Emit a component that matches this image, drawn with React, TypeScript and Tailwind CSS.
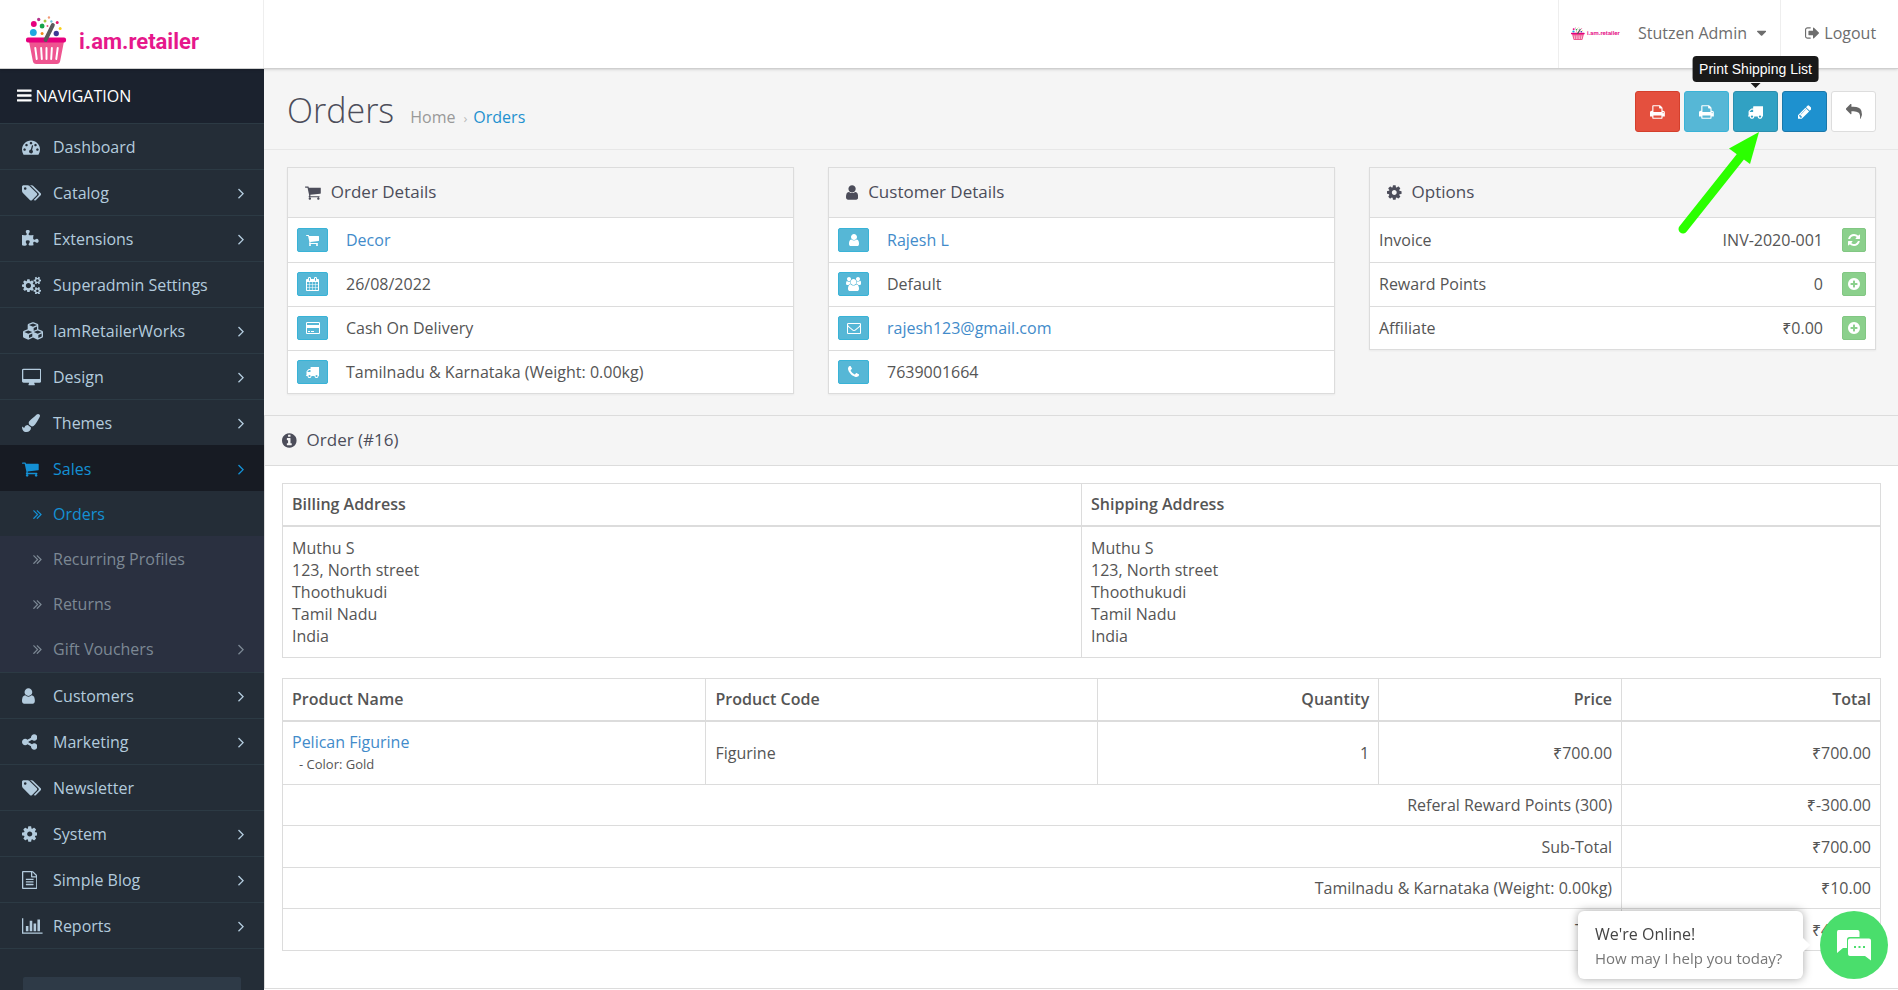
import type { ReactNode } from "react";
import { FaCubes, FaPaintBrush } from "react-icons/fa";

// [left edge, width, path] on a 1792 high grid
const GLYPHS: Record<string, [number, number, string]> = {
  bars: [128, 1536, "M1664 1344v128q0 26-19 45t-45 19h-1408q-26 0-45-19t-19-45v-128q0-26 19-45t45-19h1408q26 0 45 19t19 45zm0-512v128q0 26-19 45t-45 19h-1408q-26 0-45-19t-19-45v-128q0-26 19-45t45-19h1408q26 0 45 19t19 45zm0-512v128q0 26-19 45t-45 19h-1408q-26 0-45-19t-19-45v-128q0-26 19-45t45-19h1408q26 0 45 19t19 45z"],
  dashboard: [0, 1792, "M384 1152q0-53-37.5-90.5t-90.5-37.5-90.5 37.5-37.5 90.5 37.5 90.5 90.5 37.5 90.5-37.5 37.5-90.5zm192-448q0-53-37.5-90.5t-90.5-37.5-90.5 37.5-37.5 90.5 37.5 90.5 90.5 37.5 90.5-37.5 37.5-90.5zm428 481l101-382q6-26-7.5-48.5t-38.5-29.5-48 6.5-30 39.5l-101 382q-60 5-107 43.5t-63 98.5q-20 77 20 146t117 89 146-20 89-117q16-60-6-117t-72-91zm660-33q0-53-37.5-90.5t-90.5-37.5-90.5 37.5-37.5 90.5 37.5 90.5 90.5 37.5 90.5-37.5 37.5-90.5zm-640-640q0-53-37.5-90.5t-90.5-37.5-90.5 37.5-37.5 90.5 37.5 90.5 90.5 37.5 90.5-37.5 37.5-90.5zm448 192q0-53-37.5-90.5t-90.5-37.5-90.5 37.5-37.5 90.5 37.5 90.5 90.5 37.5 90.5-37.5 37.5-90.5zm320 448q0 261-141 483-19 29-54 29h-1402q-35 0-54-29-141-221-141-483 0-182 71-348t191-286 286-191 348-71 348 71 286 191 191 286 71 348z"],
  tags: [128, 1900, "M576 448q0-53-37.5-90.5t-90.5-37.5-90.5 37.5-37.5 90.5 37.5 90.5 90.5 37.5 90.5-37.5 37.5-90.5zm1067 576q0 53-37 90l-491 492q-39 37-91 37-53 0-90-37l-715-716q-38-37-64.5-101t-26.5-117v-416q0-52 38-90t90-38h416q53 0 117 26.5t102 64.5l715 714q37 39 37 91zm384 0q0 53-37 90l-491 492q-39 37-91 37-36 0-59-14t-53-45l470-470q37-37 37-90 0-52-37-91l-715-714q-38-38-102-64.5t-117-26.5h224q53 0 117 26.5t102 64.5l715 714q37 39 37 91z"],
  puzzle: [96, 1664, "M1755 1083q0 81-44.5 135t-123.5 54q-41 0-77.5-17.5t-59-38-56.5-38-71-17.5q-110 0-110 124 0 39 16 115t15 115v5q-22 0-33 1-34 3-97.5 11.5t-115.5 13.5-98 5q-61 0-103-26.5t-42-83.5q0-37 17.5-71t38-56.5 38-59 17.5-77.5q0-79-54-123.5t-135-44.5q-84 0-143 45.5t-59 127.5q0 43 15 83t33.5 64.5 33.5 53 15 50.5q0 45-46 89-37 35-117 35-95 0-245-24-9-2-27.5-4t-27.5-4l-13-2q-1 0-3-1-2 0-2-1v-1024q2 1 17.5 3.5t34 5 21.5 3.5q150 24 245 24 80 0 117-35 46-44 46-89 0-22-15-50.5t-33.5-53-33.5-64.5-15-83q0-82 59-127.5t144-45.5q80 0 134 44.5t54 123.5q0 41-17.5 77.5t-38 59-38 56.5-17.5 71q0 57 42 83.5t103 26.5q64 0 180-15t163-17v2q-1 2-3.5 17.5t-5 34-3.5 21.5q-24 150-24 245 0 80 35 117 44 46 89 46 22 0 50.5-15t53-33.5 64.5-33.5 83-15q82 0 127.5 59t45.5 143z"],
  cogs: [0, 1920, "M896 960q0-106-75-181t-181-75-181 75-75 181 75 181 181 75 181-75 75-181zm768 512q0-52-38-90t-90-38-90 38-38 90q0 53 37.5 90.5t90.5 37.5 90.5-37.5 37.5-90.5zm0-1024q0-52-38-90t-90-38-90 38-38 90q0 53 37.5 90.5t90.5 37.5 90.5-37.5 37.5-90.5zm-384 421v185q0 10-7 19.5t-16 10.5l-155 24q-11 35-32 76 34 48 90 115 7 11 7 20 0 12-7 19-23 30-82.5 89.5t-78.5 59.5q-11 0-21-7l-115-90q-37 19-77 31-11 108-23 155-7 24-30 24h-186q-11 0-20-7.5t-10-17.5l-23-153q-34-10-75-31l-118 89q-7 7-20 7-11 0-21-8-144-133-144-160 0-9 7-19 10-14 41-53t47-61q-23-44-35-82l-152-24q-10-1-17-9.5t-7-19.5v-185q0-10 7-19.5t16-10.5l155-24q11-35 32-76-34-48-90-115-7-11-7-20 0-12 7-20 22-30 82-89t79-59q11 0 21 7l115 90q34-18 77-32 11-108 23-154 7-24 30-24h186q11 0 20 7.5t10 17.5l23 153q34 10 75 31l118-89q8-7 20-7 11 0 21 8 144 133 144 160 0 8-7 19-12 16-42 54t-45 60q23 48 34 82l152 23q10 2 17 10.5t7 19.5zm640 533v140q0 16-149 31-12 27-30 52 51 113 51 138 0 4-4 7-122 71-124 71-8 0-46-47t-52-68q-20 2-30 2t-30-2q-14 21-52 68t-46 47q-2 0-124-71-4-3-4-7 0-25 51-138-18-25-30-52-149-15-149-31v-140q0-16 149-31 13-29 30-52-51-113-51-138 0-4 4-7 4-2 35-20t59-34 30-16q8 0 46 46.5t52 67.5q20-2 30-2t30 2q51-71 92-112l6-2q4 0 124 70 4 3 4 7 0 25-51 138 17 23 30 52 149 15 149 31zm0-1024v140q0 16-149 31-12 27-30 52 51 113 51 138 0 4-4 7-122 71-124 71-8 0-46-47t-52-68q-20 2-30 2t-30-2q-14 21-52 68t-46 47q-2 0-124-71-4-3-4-7 0-25 51-138-18-25-30-52-149-15-149-31v-140q0-16 149-31 13-29 30-52-51-113-51-138 0-4 4-7 4-2 35-20t59-34 30-16q8 0 46 46.5t52 67.5q20-2 30-2t30 2q51-71 92-112l6-2q4 0 124 70 4 3 4 7 0 25-51 138 17 23 30 52 149 15 149 31z"],
  desktop: [0, 1920, "M1792 1056v-832q0-13-9.5-22.5t-22.5-9.5h-1600q-13 0-22.5 9.5t-9.5 22.5v832q0 13 9.5 22.5t22.5 9.5h1600q13 0 22.5-9.5t9.5-22.5zm128-832v1088q0 66-47 113t-113 47h-544q0 37 16 77.5t32 71 16 43.5q0 26-19 45t-45 19h-512q-26 0-45-19t-19-45q0-14 16-44t32-70 16-78h-544q-66 0-113-47t-47-113v-1088q0-66 47-113t113-47h1600q66 0 113 47t47 113z"],
  cart: [64, 1664, "M704 1536q0 52-38 90t-90 38-90-38-38-90 38-90 90-38 90 38 38 90zm896 0q0 52-38 90t-90 38-90-38-38-90 38-90 90-38 90 38 38 90zm128-1088v512q0 24-16.5 42.5t-40.5 21.5l-1044 122q13 60 13 70 0 16-24 64h920q26 0 45 19t19 45-19 45-45 19h-1024q-26 0-45-19t-19-45q0-11 8-31.5t16-36 21.5-40 15.5-29.5l-177-823h-204q-26 0-45-19t-19-45 19-45 45-19h256q16 0 28.5 6.5t19.5 15.5 13 24.5 8 26 5.5 29.5 4.5 26h1201q26 0 45 19t19 45z"],
  user: [256, 1280, "M1536 1399q0 109-62.5 187t-150.5 78h-854q-88 0-150.5-78t-62.5-187q0-85 8.5-160.5t31.5-152 58.5-131 94-89 134.5-34.5q131 128 313 128t313-128q76 0 134.5 34.5t94 89 58.5 131 31.5 152 8.5 160.5zm-256-887q0 159-112.5 271.5t-271.5 112.5-271.5-112.5-112.5-271.5 112.5-271.5 271.5-112.5 271.5 112.5 112.5 271.5z"],
  users: [0, 1920, "M593 896q-162 5-265 128h-134q-82 0-138-40.5t-56-118.5q0-353 124-353 6 0 43.5 21t97.5 42.5 119 21.5q67 0 133-23-5 37-5 66 0 159 93 287zm1071 637q0 120-73 189.5t-194 69.5h-874q-121 0-194-69.5t-73-189.5q0-53 3.5-103.5t14-109 26.5-108.5 43-97.5 62-81 85.5-53.5 111.5-20q10 0 43 21.5t73 48 107 48 135 21.5 135-21.5 107-48 73-48 43-21.5q61 0 111.5 20t85.5 53.5 62 81 43 97.5 26.5 108.5 14 109 3.5 103.5zm-1024-1277q0 106-75 181t-181 75-181-75-75-181 75-181 181-75 181 75 75 181zm704 384q0 159-112.5 271.5t-271.5 112.5-271.5-112.5-112.5-271.5 112.5-271.5 271.5-112.5 271.5 112.5 112.5 271.5zm576 225q0 78-56 118.5t-138 40.5h-134q-103-123-265-128 93-128 93-287 0-29-5-66 66 23 133 23 59 0 119-21.5t97.5-42.5 43.5-21q124 0 124 353zm-128-609q0 106-75 181t-181 75-181-75-75-181 75-181 181-75 181 75 75 181z"],
  share: [128, 1536, "M1344 1024q133 0 226.5 93.5t93.5 226.5-93.5 226.5-226.5 93.5-226.5-93.5-93.5-226.5q0-12 2-34l-360-180q-92 86-218 86-133 0-226.5-93.5t-93.5-226.5 93.5-226.5 226.5-93.5q126 0 218 86l360-180q-2-22-2-34 0-133 93.5-226.5t226.5-93.5 226.5 93.5 93.5 226.5-93.5 226.5-226.5 93.5q-126 0-218-86l-360 180q2 22 2 34t-2 34l360 180q92-86 218-86z"],
  cog: [128, 1536, "M1152 896q0-106-75-181t-181-75-181 75-75 181 75 181 181 75 181-75 75-181zm512-109v222q0 12-8 23t-20 13l-185 28q-19 54-39 91 35 50 107 138 10 12 10 25t-9 23q-27 37-99 108t-94 71q-12 0-26-9l-138-108q-44 23-91 38-16 136-29 186-7 28-36 28h-222q-14 0-24.5-8.5t-11.5-21.5l-28-184q-49-16-90-37l-141 107q-10 9-25 9-14 0-25-11-126-114-165-168-7-10-7-23 0-12 8-23 15-21 51-66.5t54-70.5q-27-50-41-99l-183-27q-13-2-21-12.5t-8-23.5v-222q0-12 8-23t19-13l186-28q14-46 39-92-40-57-107-138-10-12-10-24 0-10 9-23 26-36 98.5-107.5t94.5-71.5q13 0 26 10l138 107q44-23 91-38 16-136 29-186 7-28 36-28h222q14 0 24.5 8.5t11.5 21.5l28 184q49 16 90 37l142-107q9-9 24-9 13 0 25 10 129 119 165 170 7 8 7 22 0 12-8 23-15 21-51 66.5t-54 70.5q26 50 41 98l183 28q13 2 21 12.5t8 23.5z"],
  file: [128, 1536, "M1596 380q28 28 48 76t20 88v1152q0 40-28 68t-68 28h-1344q-40 0-68-28t-28-68v-1600q0-40 28-68t68-28h896q40 0 88 20t76 48zm-444-244v376h376q-10-29-22-41l-313-313q-12-12-41-22zm384 1528v-1024h-416q-40 0-68-28t-28-68v-416h-768v1536h1280zm-1024-864q0-14 9-23t23-9h704q14 0 23 9t9 23v64q0 14-9 23t-23 9h-704q-14 0-23-9t-9-23v-64zm736 224q14 0 23 9t9 23v64q0 14-9 23t-23 9h-704q-14 0-23-9t-9-23v-64q0-14 9-23t23-9h704zm0 256q14 0 23 9t9 23v64q0 14-9 23t-23 9h-704q-14 0-23-9t-9-23v-64q0-14 9-23t23-9h704z"],
  chart: [0, 2048, "M640 896v512h-256v-512h256zm384-512v1024h-256v-1024h256zm1024 1152v128h-2048v-1536h128v1408h1920zm-640-896v768h-256v-768h256zm384-384v1152h-256v-1152h256z"],
  angle: [576, 640, "M1171 960q0 13-10 23l-466 466q-10 10-23 10t-23-10l-50-50q-10-10-10-23t10-23l393-393-393-393q-10-10-10-23t10-23l50-50q10-10 23-10t23 10l466 466q10 10 10 23z"],
  angles: [512, 1024, "M1107 960q0 13-10 23l-466 466q-10 10-23 10t-23-10l-50-50q-10-10-10-23t10-23l393-393-393-393q-10-10-10-23t10-23l50-50q10-10 23-10t23 10l466 466q10 10 10 23zm384 0q0 13-10 23l-466 466q-10 10-23 10t-23-10l-50-50q-10-10-10-23t10-23l393-393-393-393q-10-10-10-23t10-23l50-50q10-10 23-10t23 10l466 466q10 10 10 23z"],
  print: [64, 1664, "M448 1536h896v-256h-896v256zm0-640h896v-384h-160q-40 0-68-28t-28-68v-160h-640v640zm1152 64q0-26-19-45t-45-19-45 19-19 45 19 45 45 19 45-19 19-45zm128 0v416q0 13-9.5 22.5t-22.5 9.5h-224v160q0 40-28 68t-68 28h-960q-40 0-68-28t-28-68v-160h-224q-13 0-22.5-9.5t-9.5-22.5v-416q0-79 56.5-135.5t135.5-56.5h64v-544q0-40 28-68t68-28h672q40 0 88 20t76 48l152 152q28 28 48 76t20 88v256h64q79 0 135.5 56.5t56.5 135.5z"],
  truck: [64, 1728, "M640 1408q0-52-38-90t-90-38-90 38-38 90 38 90 90 38 90-38 38-90zm-384-512h384v-256h-158q-13 0-22 9l-195 195q-9 9-9 22v30zm1280 512q0-52-38-90t-90-38-90 38-38 90 38 90 90 38 90-38 38-90zm256-1088v1024q0 15-4 26.5t-13.5 18.5-16.5 11.5-23.5 6-22.5 2-25.5 0-22.5-.5q0 106-75 181t-181 75-181-75-75-181h-384q0 106-75 181t-181 75-181-75-75-181h-64q-3 0-22.5.5t-25.5 0-22.5-2-23.5-6-16.5-11.5-13.5-18.5-4-26.5q0-26 19-45t45-19v-320q0-8-.5-35t0-38 2.5-34.5 6.5-37 14-30.5 22.5-30l198-198q19-19 50.5-32t58.5-13h160v-192q0-26 19-45t45-19h1024q26 0 45 19t19 45z"],
  pencil: [128, 1536, "M491 1536l91-91-235-235-91 91v107h128v128h107zm523-928q0-22-22-22-10 0-17 7l-542 542q-7 7-7 17 0 22 22 22 10 0 17-7l542-542q7-7 7-17zm-54-192l416 416-832 832h-416v-416zm683 96q0 53-37 90l-166 166-416-416 166-165q36-38 90-38 53 0 91 38l235 234q37 39 37 91z"],
  reply: [0, 1792, "M1792 1120q0 166-127 451-3 7-10.5 24t-13.5 30-13 22q-12 17-28 17-15 0-23.5-10t-8.5-25q0-9 2.5-26.5t2.5-23.5q5-68 5-123 0-112-19.5-200.5t-54-153.5-89-112-116-80-138.5-50-158-27-172.5-8h-224v256q0 26-19 45t-45 19-45-19l-512-512q-19-19-19-45t19-45l512-512q19-19 45-19t45 19 19 45v256h224q713 0 875 403 53 134 53 333z"],
  caret: [384, 1024, "M1408 704q0 26-19 45l-448 448q-19 19-45 19t-45-19l-448-448q-19-19-19-45t19-45 45-19h896q26 0 45 19t19 45z"],
  signout: [64, 1600, "M704 1440q0 4 1 20t.5 26.5-3 23.5-10 19.5-20.5 6.5h-320q-119 0-203.5-84.5t-84.5-203.5v-704q0-119 84.5-203.5t203.5-84.5h320q13 0 22.5 9.5t9.5 22.5q0 4 1 20t.5 26.5-3 23.5-10 19.5-20.5 6.5h-320q-66 0-113 47t-47 113v704q0 66 47 113t113 47h312l11.5 1 11.5 3 8 5.5 7 9 2 13.5zm928-544q0 26-19 45l-544 544q-19 19-45 19t-45-19-19-45v-288h-448q-26 0-45-19t-19-45v-384q0-26 19-45t45-19h448v-288q0-26 19-45t45-19 45 19l544 544q19 19 19 45z"],
  calendar: [64, 1664, "M192 1664h288v-288h-288v288zm352 0h320v-288h-320v288zm-352-352h288v-320h-288v320zm352 0h320v-320h-320v320zm-352-384h288v-288h-288v288zm736 736h320v-288h-320v288zm-384-736h320v-288h-320v288zm768 736h288v-288h-288v288zm-384-352h320v-320h-320v320zm-352-864v-288q0-13-9.5-22.5t-22.5-9.5h-64q-13 0-22.5 9.5t-9.5 22.5v288q0 13 9.5 22.5t22.5 9.5h64q13 0 22.5-9.5t9.5-22.5zm736 864h288v-320h-288v320zm-384-384h320v-288h-320v288zm384 0h288v-288h-288v288zm32-480v-288q0-13-9.5-22.5t-22.5-9.5h-64q-13 0-22.5 9.5t-9.5 22.5v288q0 13 9.5 22.5t22.5 9.5h64q13 0 22.5-9.5t9.5-22.5zm384-64v1280q0 52-38 90t-90 38h-1408q-52 0-90-38t-38-90v-1280q0-52 38-90t90-38h128v-96q0-66 47-113t113-47h64q66 0 113 47t47 113v96h384v-96q0-66 47-113t113-47h64q66 0 113 47t47 113v96h128q52 0 90 38t38 90z"],
  card: [0, 1792, "M1632 128q66 0 113 47t47 113v1216q0 66-47 113t-113 47h-1472q-66 0-113-47t-47-113v-1216q0-66 47-113t113-47h1472zm-1472 128q-13 0-22.5 9.5t-9.5 22.5v224h1536v-224q0-13-9.5-22.5t-22.5-9.5h-1472zm1472 1280q13 0 22.5-9.5t9.5-22.5v-608h-1536v608q0 13 9.5 22.5t22.5 9.5h1472zm-1376-128v-128h256v128h-256zm384 0v-128h384v128h-384z"],
  refresh: [128, 1536, "M1639 1056q0 5-1 7-64 268-268 434.5t-478 166.5q-146 0-282.5-55t-243.5-157l-129 129q-19 19-45 19t-45-19-19-45v-448q0-26 19-45t45-19h448q26 0 45 19t19 45-19 45l-137 137q71 66 161 102t187 36q134 0 250-65t186-179q11-17 53-117 8-23 30-23h192q13 0 22.5 9.5t9.5 22.5zm25-800v448q0 26-19 45t-45 19h-448q-26 0-45-19t-19-45 19-45l138-138q-148-137-349-137-134 0-250 65t-186 179q-11 17-53 117-8 23-30 23h-199q-13 0-22.5-9.5t-9.5-22.5v-7q65-268 270-434.5t480-166.5q146 0 284 55.5t245 156.5l130-129q19-19 45-19t45 19 19 45z"],
  plus: [128, 1536, "M1344 960v-128q0-26-19-45t-45-19h-256v-256q0-26-19-45t-45-19h-128q-26 0-45 19t-19 45v256h-256q-26 0-45 19t-19 45v128q0 26 19 45t45 19h256v256q0 26 19 45t45 19h128q26 0 45-19t19-45v-256h256q26 0 45-19t19-45zm320-64q0 209-103 385.5t-279.5 279.5-385.5 103-385.5-103-279.5-279.5-103-385.5 103-385.5 279.5-279.5 385.5-103 385.5 103 279.5 279.5 103 385.5z"],
  info: [128, 1536, "M1152 1376v-160q0-14-9-23t-23-9h-96v-512q0-14-9-23t-23-9h-320q-14 0-23 9t-9 23v160q0 14 9 23t23 9h96v320h-96q-14 0-23 9t-9 23v160q0 14 9 23t23 9h448q14 0 23-9t9-23zm-128-896v-160q0-14-9-23t-23-9h-192q-14 0-23 9t-9 23v160q0 14 9 23t23 9h192q14 0 23-9t9-23zm640 416q0 209-103 385.5t-279.5 279.5-385.5 103-385.5-103-279.5-279.5-103-385.5 103-385.5 279.5-279.5 385.5-103 385.5 103 279.5 279.5 103 385.5z"],
  phone: [192, 1408, "M1600 1240q0 27-10 70.5t-21 68.5q-21 50-122 106-94 51-186 51-27 0-53-3.5t-57.5-12.5-47-14.5-55.5-20.5-49-18q-98-35-175-83-127-79-264-216t-216-264q-48-77-83-175-3-9-18-49t-20.5-55.5-14.5-47-12.5-57.5-3.5-53q0-92 51-186 56-101 106-122 25-11 68.5-21t70.5-10q14 0 21 3 18 6 53 76 11 19 30 54t35 63.5 31 53.5q3 4 17.5 25t21.5 35.5 7 28.5q0 20-28.5 50t-62 55-62 53-28.5 46q0 9 5 22.5t8.5 20.5 14 24 11.5 19q76 137 174 235t235 174q2 1 19 11.5t24 14 20.5 8.5 22.5 5q18 0 46-28.5t53-62 55-62 50-28.5q14 0 28.5 7t35.5 21.5 25 17.5q25 15 53.5 31t63.5 35 54 30q70 35 76 53 3 7 3 21z"],
  envelope: [0, 1792, "M1664 1504v-768q-32 36-69 66-268 206-426 338-51 43-83 67t-86.5 48.5-102.5 24.5h-2q-48 0-102.5-24.5t-86.5-48.5-83-67q-158-132-426-338-37-30-69-66v768q0 13 9.5 22.5t22.5 9.5h1472q13 0 22.5-9.5t9.5-22.5zm0-1051v-24.5l-.5-13-3-12.5-5.5-9-9-7.5-14-2.5h-1472q-13 0-22.5 9.5t-9.5 22.5q0 168 147 284 193 152 401 317 6 5 35 29.5t46 37.5 44.5 31.5 50.5 27.5 43 9h2q20 0 43-9t50.5-27.5 44.5-31.5 46-37.5 35-29.5q208-165 401-317 54-43 100.5-115.5t46.5-131.5zm128-37v1088q0 66-47 113t-113 47h-1472q-66 0-113-47t-47-113v-1088q0-66 47-113t113-47h1472q66 0 113 47t47 113z"],
};

function Icon({ name, className = "h-4" }: { name: string; className?: string }) {
  if (name === "cubes") return <FaCubes className="h-[20px] w-[22px]" aria-hidden="true" />;
  if (name === "brush") return <FaPaintBrush className="size-[18px]" aria-hidden="true" />;
  const [x, w, d] = GLYPHS[name];
  return (
    <svg viewBox={`${x} 0 ${w} 1792`} className={`w-auto shrink-0 ${className}`} fill="currentColor" aria-hidden="true">
      <path d={d} />
    </svg>
  );
}

function Basket({ className }: { className: string }) {
  return (
    <svg viewBox="0 0 42 48" className={className} preserveAspectRatio="none" aria-hidden="true">
      <circle cx="8" cy="8" r="3" fill="#e6007e" />
      <circle cx="13" cy="3.500" r="1.700" fill="#b5348c" />
      <circle cx="16.500" cy="10" r="2.500" fill="#16a34a" />
      <circle cx="19.500" cy="5" r="1.500" fill="#a3c940" />
      <circle cx="23.500" cy="1.500" r="1.200" fill="#f29a76" />
      <circle cx="26" cy="5.500" r="1.200" fill="#6cc5d8" />
      <circle cx="32" cy="6.500" r="1.500" fill="#e6186c" />
      <circle cx="35" cy="12.500" r="1.500" fill="#fbd11b" />
      <circle cx="22" cy="10" r="1" fill="#e75480" />
      <circle cx="7.500" cy="16.500" r="3.500" fill="#1ea7e1" />
      <circle cx="16.500" cy="17.500" r="1.500" fill="#f28a1c" />
      <circle cx="31" cy="17.500" r="2.700" fill="#3b3a94" />
      <path d="M3 25h36l-4 20q-.5 3-3.500 3h-21q-3 0-3.500-3z" fill="#ee5590" />
      <rect x="0" y="21.500" width="41" height="5" rx="2" fill="#e6007e" />
      <path d="M9.500 32l1.500 11M15.500 32l.7 11M21 32v11M26.500 32l-.7 11M32.500 32l-1.500 11" stroke="#fff" strokeWidth="2" strokeLinecap="round" />
      <path d="M27.500 9L20 24" stroke="#5b5b5b" strokeWidth="4" strokeLinecap="round" />
    </svg>
  );
}

const NAV_TOP = [
  { icon: "dashboard", label: "Dashboard", open: false },
  { icon: "tags", label: "Catalog", open: true },
  { icon: "puzzle", label: "Extensions", open: true },
  { icon: "cogs", label: "Superadmin Settings", open: false },
  { icon: "cubes", label: "IamRetailerWorks", open: true },
  { icon: "desktop", label: "Design", open: true },
  { icon: "brush", label: "Themes", open: true },
];

const NAV_SALES = [
  { label: "Orders", active: true, open: false },
  { label: "Recurring Profiles", active: false, open: false },
  { label: "Returns", active: false, open: false },
  { label: "Gift Vouchers", active: false, open: true },
];

const NAV_BOTTOM = [
  { icon: "user", label: "Customers", open: true },
  { icon: "share", label: "Marketing", open: true },
  { icon: "tags", label: "Newsletter", open: false },
  { icon: "cog", label: "System", open: true },
  { icon: "file", label: "Simple Blog", open: true },
  { icon: "chart", label: "Reports", open: true },
];

function NavItem({ icon, label, open, active = false }: { icon: string; label: string; open: boolean; active?: boolean }) {
  return (
    <li>
      <a
        href="#"
        className={`flex h-[46px] items-center border-t pr-5 pl-[22px] ${
          active ? "border-[#171b23] bg-[#171b23] text-[#1490d4]" : "border-[#2c3a44] text-[#b3cbdd]"
        }`}
      >
        <span className="flex w-[31px] items-center">
          <Icon name={icon} className="h-[18px]" />
        </span>
        {label}
        {open && <Icon name="angle" className="ml-auto h-[18px]" />}
      </a>
    </li>
  );
}

function Panel({ icon, title, children }: { icon: string; title: string; children: ReactNode }) {
  return (
    <section className="border border-[#dcdcdc] bg-white shadow-xs">
      <h3 className="flex h-[50px] items-center gap-[10px] border-b border-[#dcdcdc] bg-[#f5f5f5] px-[17px] pb-px text-[17px] text-[#4c4d5a]">
        <Icon name={icon} className="h-[17px]" />
        {title}
      </h3>
      <table className="w-full">
        <tbody>{children}</tbody>
      </table>
    </section>
  );
}

function InfoRow({ icon, label, href, children }: { icon: string; label: string; href?: string; children: string }) {
  return (
    <tr className="h-[44px] border-b border-[#dcdcdc] last:h-[43px] last:border-b-0">
      <td className="w-[58px] pl-[9px]">
        <button
          type="button"
          aria-label={label}
          className="flex h-6 w-[31px] items-center justify-center rounded-xs border border-[#39b3d7] bg-[#56b7d6] text-white"
        >
          <Icon name={icon} className="h-[14px]" />
        </button>
      </td>
      <td>
        {href ? (
          <a href={href} className="text-[#428bca]">
            {children}
          </a>
        ) : (
          children
        )}
      </td>
    </tr>
  );
}

function OptionRow({ icon, label, value }: { icon: string; label: string; value: string }) {
  return (
    <tr className="h-[44px] border-b border-[#dcdcdc] last:h-[43px] last:border-b-0">
      <td className="pl-[9px]">{label}</td>
      <td className="text-right">{value}</td>
      <td className="w-[52px] pr-[9px]">
        <button
          type="button"
          aria-label={`Update ${label}`}
          className="ml-auto flex size-6 items-center justify-center rounded-xs border border-[#82c783] bg-[#8bd08c] text-white"
        >
          <Icon name={icon} className="h-[14px]" />
        </button>
      </td>
    </tr>
  );
}

const TOTALS = [
  ["Referal Reward Points (300)", "₹-300.00"],
  ["Sub-Total", "₹700.00"],
  ["Tamilnadu & Karnataka (Weight: 0.00kg)", "₹10.00"],
  ["Total", "₹410.00"],
];

const CELL = "border border-[#dcdcdc] px-[9px] py-[9px]";
const HEAD = "h-[42px] border border-b-2 border-[#dcdcdc] px-[9px] font-semibold";
const ACTION = "flex h-[41px] w-[45px] items-center justify-center rounded-[3px] border";

function Address() {
  return (
    <td className={CELL}>
      Muthu S
      <br />
      123, North street
      <br />
      Thoothukudi
      <br />
      Tamil Nadu
      <br />
      India
    </td>
  );
}

export default function App() {
  return (
    <div className="flex min-h-screen flex-col bg-white font-['Open_Sans','Noto_Sans',sans-serif] text-[16px] leading-[22px] text-[#555]">
      <header className="relative z-10 flex h-[69px] border-b border-[#cfcfcf] bg-white text-[#6d6d6d] shadow-sm">
        <a href="#" className="flex w-[264px] gap-3 border-r border-[#eee] pt-4 pl-[26px]">
          <Basket className="h-[48px] w-[41px]" />
          <span className="pt-[14px] font-['Roboto',sans-serif] text-[22px] leading-6 font-bold text-[#e6188b]">i.am.retailer</span>
        </a>
        <div className="ml-auto flex">
          <button type="button" className="flex w-[223px] items-center border-x border-[#eee] pb-[2px] pl-3">
            <Basket className="h-[13px] w-[14px]" />
            <span className="w-[53px] pl-[2px] text-left font-['Roboto',sans-serif] text-[6px] font-bold text-[#e6188b]">i.am.retailer</span>
            Stutzen Admin
            <Icon name="caret" className="ml-[10px] h-4" />
          </button>
          <a href="#" className="flex w-[117px] items-center gap-[5px] pb-[2px] pl-6">
            <Icon name="signout" className="h-4" />
            Logout
          </a>
        </div>
      </header>

      <div className="flex flex-1">
        <nav className="flex w-[264px] shrink-0 flex-col bg-[#242d37]">
          <div className="flex h-[54px] items-center gap-1 bg-[#1b222e] pb-px pl-[17px] text-white">
            <Icon name="bars" className="h-[17px]" />
            NAVIGATION
          </div>
          <ul className="border-b border-[#2c3a44]">
            {NAV_TOP.map((n) => (
              <NavItem key={n.label} {...n} />
            ))}
            <NavItem icon="cart" label="Sales" open active />
            <li>
              <ul className="bg-[#2a3040] pb-px">
                {NAV_SALES.map((n) => (
                  <li key={n.label}>
                    <a
                      href="#"
                      className={`flex h-[45px] items-center pr-5 pl-[33px] ${
                        n.active ? "bg-[#242d37] text-[#1490d4]" : "text-[#7c8894]"
                      }`}
                    >
                      <span className="w-5">
                        <Icon name="angles" className="h-4" />
                      </span>
                      {n.label}
                      {n.open && <Icon name="angle" className="ml-auto h-[18px]" />}
                    </a>
                  </li>
                ))}
              </ul>
            </li>
            {NAV_BOTTOM.map((n) => (
              <NavItem key={n.label} {...n} />
            ))}
          </ul>
          <div className="mx-[23px] mt-7 flex-1 rounded-t-xs bg-[#2e3a47]" />
        </nav>

        <main className="min-w-0 flex-1">
          <div className="bg-[#f5f5f5]">
            <div className="flex h-[81px] justify-between border-b border-[#e7e7e7] pr-[22px] pl-[23px]">
              <div className="flex items-baseline gap-4 pt-[15px]">
                <h1 className="text-[34px] leading-[52px] font-light text-[#4c4d5a]">Orders</h1>
                <nav className="flex items-baseline gap-[6px]">
                  <a href="#" className="mr-[2px] text-[#999]">
                    Home
                  </a>
                  <span className="text-[13px] text-[#bbb]">›</span>
                  <a href="#" className="text-[#1e91cf]">
                    Orders
                  </a>
                </nav>
              </div>
              <div className="flex gap-1 pt-[22px]">
                <button type="button" aria-label="Print Invoice" className={`${ACTION} border-[#d43f2c] bg-[#e4503e] text-white`}>
                  <Icon name="print" />
                </button>
                <button type="button" aria-label="Print Order" className={`${ACTION} border-[#39b3d7] bg-[#56b7d6] text-white`}>
                  <Icon name="print" />
                </button>
                <div className="relative">
                  <button type="button" aria-label="Print Shipping List" className={`${ACTION} border-[#2a8fae] bg-[#31a1c3] text-white`}>
                    <Icon name="truck" />
                  </button>
                  <div
                    role="tooltip"
                    className="absolute bottom-full left-1/2 z-20 mb-[9px] -translate-x-1/2 rounded-sm bg-[#191919] px-[7px] py-[2px] font-['Liberation_Sans',Arial,sans-serif] text-[14px] whitespace-nowrap text-white"
                  >
                    Print Shipping List
                    <span className="absolute top-[27px] left-1/2 -translate-x-1/2 border-x-[5px] border-t-[5px] border-x-transparent border-t-[#191919]" />
                  </div>
                  <svg className="pointer-events-none absolute top-[37px] -left-[58px] z-20 h-[108px] w-[90px]" viewBox="0 0 90 108" aria-hidden="true">
                    <path d="M8 101L66 28" stroke="#2bff00" strokeWidth="9" strokeLinecap="round" />
                    <path d="M84 4L54 20.500L75 36z" fill="#2bff00" />
                  </svg>
                </div>
                <button type="button" aria-label="Edit" className={`${ACTION} border-[#1978ab] bg-[#1e91cf] text-white`}>
                  <Icon name="pencil" />
                </button>
                <button type="button" aria-label="Back" className={`${ACTION} border-[#ddd] bg-white text-[#666]`}>
                  <Icon name="reply" />
                </button>
              </div>
            </div>

            <div className="grid grid-cols-3 items-start gap-[34px] pt-[17px] pr-[22px] pb-[21px] pl-[23px]">
              <Panel icon="cart" title="Order Details">
                <InfoRow icon="cart" label="Store" href="#">Decor</InfoRow>
                <InfoRow icon="calendar" label="Date Added">26/08/2022</InfoRow>
                <InfoRow icon="card" label="Payment Method">Cash On Delivery</InfoRow>
                <InfoRow icon="truck" label="Shipping Method">{"Tamilnadu & Karnataka (Weight: 0.00kg)"}</InfoRow>
              </Panel>
              <Panel icon="user" title="Customer Details">
                <InfoRow icon="user" label="Customer" href="#">Rajesh L</InfoRow>
                <InfoRow icon="users" label="Customer Group">Default</InfoRow>
                <InfoRow icon="envelope" label="E-Mail" href="#">rajesh123@gmail.com</InfoRow>
                <InfoRow icon="phone" label="Telephone">7639001664</InfoRow>
              </Panel>
              <Panel icon="cog" title="Options">
                <OptionRow icon="refresh" label="Invoice" value="INV-2020-001" />
                <OptionRow icon="plus" label="Reward Points" value="0" />
                <OptionRow icon="plus" label="Affiliate" value="₹0.00" />
              </Panel>
            </div>
          </div>

          <section className="border-y border-l border-[#dcdcdc]">
            <h3 className="flex h-[50px] items-center gap-[10px] border-b border-[#dcdcdc] bg-[#f5f5f5] px-[17px] pb-px text-[17px] text-[#4c4d5a]">
              <Icon name="info" className="h-[17px]" />
              Order (#16)
            </h3>
            <div className="flex flex-col gap-5 pt-[17px] pr-[17px] pb-[37px] pl-[17px]">
              <table className="w-full table-fixed border-collapse text-left">
                <thead>
                  <tr>
                    <th className={HEAD}>Billing Address</th>
                    <th className={HEAD}>Shipping Address</th>
                  </tr>
                </thead>
                <tbody>
                  <tr className="h-[132px]">
                    <Address />
                    <Address />
                  </tr>
                </tbody>
              </table>

              <table className="w-full table-fixed border-collapse">
                <colgroup>
                  <col className="w-[26.5%]" />
                  <col className="w-[24.5%]" />
                  <col className="w-[17.6%]" />
                  <col className="w-[15.2%]" />
                  <col className="w-[16.2%]" />
                </colgroup>
                <thead>
                  <tr>
                    <th className={`${HEAD} text-left`}>Product Name</th>
                    <th className={`${HEAD} text-left`}>Product Code</th>
                    <th className={`${HEAD} text-right`}>Quantity</th>
                    <th className={`${HEAD} text-right`}>Price</th>
                    <th className={`${HEAD} text-right`}>Total</th>
                  </tr>
                </thead>
                <tbody>
                  <tr className="h-[64px]">
                    <td className={CELL}>
                      <a href="#" className="text-[#428bca]">
                        Pelican Figurine
                      </a>
                      <small className="block pl-[7px] text-[13px]">- Color: Gold</small>
                    </td>
                    <td className={CELL}>Figurine</td>
                    <td className={`${CELL} text-right`}>1</td>
                    <td className={`${CELL} text-right`}>₹700.00</td>
                    <td className={`${CELL} text-right`}>₹700.00</td>
                  </tr>
                  {TOTALS.map(([label, value]) => (
                    <tr key={label} className="even:h-[41px] odd:h-[42px]">
                      <td colSpan={4} className={`${CELL} text-right`}>
                        {label}
                      </td>
                      <td className={`${CELL} text-right`}>{value}</td>
                    </tr>
                  ))}
                </tbody>
              </table>
            </div>
          </section>
        </main>
      </div>

      {/* Live chat */}
      <div className="fixed right-[10px] bottom-[11px] z-30 flex items-center gap-[17px]">
        <div className="relative h-[68px] w-[225px] rounded-md bg-white px-[17px] pt-[11px] shadow-[0_0_10px_rgba(0,0,0,0.35)]">
          <span className="absolute top-[29px] -right-[5px] size-[10px] rotate-45 bg-white" />
          <p className="text-[16px] leading-6 text-[#444]">We're Online!</p>
          <p className="text-[15px] leading-6 text-[#777]">How may I help you today?</p>
        </div>
        <button type="button" aria-label="Open chat" className="flex size-[68px] items-center justify-center rounded-full bg-[#4ade6c]">
          <svg viewBox="0 0 36 32" className="h-8 w-9" aria-hidden="true">
            <path d="M2.500 1h19q2 0 2 2v5h-10q-2.500 0-2.500 2.500v8.500h-4l-6 5v-21q0-2 1.500-2z" fill="#fff" />
            <path d="M14 9.500h19q2 0 2 2V31.500l-6-4.500H14q-2 0-2-2V11.500q0-2 2-2z" fill="#fff" />
            <path d="M18 18h2M22.500 18h2M27 18h2" stroke="#4ade6c" strokeWidth="2" />
          </svg>
        </button>
      </div>
    </div>
  );
}
